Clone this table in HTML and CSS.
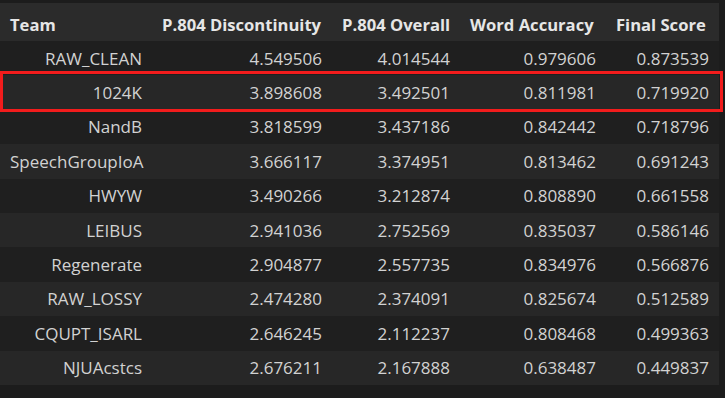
FILE: index.html
```html
<!DOCTYPE html>
<html lang="en">
<head>
    <meta charset="UTF-8">
    <meta name="viewport" content="width=device-width, initial-scale=1.0">
    <title>Leaderboard</title>
    <link rel="stylesheet" href="styles.css">
</head>
<body>
    <div class="output">
        <table class="scores">
            <colgroup>
                <col class="col-team">
                <col class="col-disc">
                <col class="col-overall">
                <col class="col-word">
                <col class="col-final">
            </colgroup>
            <thead>
                <tr>
                    <th>Team</th>
                    <th>P.804 Discontinuity</th>
                    <th>P.804 Overall</th>
                    <th>Word Accuracy</th>
                    <th>Final Score</th>
                </tr>
            </thead>
            <tbody>
                <tr><td>RAW_CLEAN</td><td>4.549506</td><td>4.014544</td><td>0.979606</td><td>0.873539</td></tr>
                <tr><td>1024K</td><td>3.898608</td><td>3.492501</td><td>0.811981</td><td>0.719920</td></tr>
                <tr><td>NandB</td><td>3.818599</td><td>3.437186</td><td>0.842442</td><td>0.718796</td></tr>
                <tr><td>SpeechGroupIoA</td><td>3.666117</td><td>3.374951</td><td>0.813462</td><td>0.691243</td></tr>
                <tr><td>HWYW</td><td>3.490266</td><td>3.212874</td><td>0.808890</td><td>0.661558</td></tr>
                <tr><td>LEIBUS</td><td>2.941036</td><td>2.752569</td><td>0.835037</td><td>0.586146</td></tr>
                <tr><td>Regenerate</td><td>2.904877</td><td>2.557735</td><td>0.834976</td><td>0.566876</td></tr>
                <tr><td>RAW_LOSSY</td><td>2.474280</td><td>2.374091</td><td>0.825674</td><td>0.512589</td></tr>
                <tr><td>CQUPT_ISARL</td><td>2.646245</td><td>2.112237</td><td>0.808468</td><td>0.499363</td></tr>
                <tr><td>NJUAcstcs</td><td>2.676211</td><td>2.167888</td><td>0.638487</td><td>0.449837</td></tr>
            </tbody>
        </table>
        <!-- annotation box around the 1024K row -->
        <div class="mark"></div>
    </div>
</body>
</html>
```

FILE: styles.css
```css
body {
    margin: 0;
    background-color: #1c1c1c;
    font-family: "Open Sans", "Noto Sans", sans-serif;
    font-size: 17px;
    color: #d2d2d2;
}
.output {
    position: relative;
    padding-top: 3px;
    height: 395px;
}
.scores {
    width: 719px;
    border-collapse: collapse;
    table-layout: fixed;
}
.col-team { width: 152px; }
.col-disc { width: 180px; }
.col-overall { width: 128px; }
.col-word { width: 146px; }
.col-final { width: 113px; }
th {
    background-color: #2b2b2b;
    color: #e6e6e6;
    font-size: 16.6px;
    font-weight: 700;
    text-align: left;
    vertical-align: bottom;
    height: 38px;
    padding: 0 10px 5px 10px;
    white-space: nowrap;
    box-sizing: border-box;
}
td {
    text-align: right;
    height: 34.4px;
    padding: 0 10px;
    box-sizing: border-box;
    white-space: nowrap;
}
tbody tr:nth-child(odd) {
    background-color: #1f1f1f;
}
tbody tr:nth-child(even) {
    background-color: #272727;
}
.mark {
    position: absolute;
    left: 0;
    top: 71px;
    width: 723px;
    height: 41px;
    border: 3px solid #f21c1c;
    box-sizing: border-box;
}
```
